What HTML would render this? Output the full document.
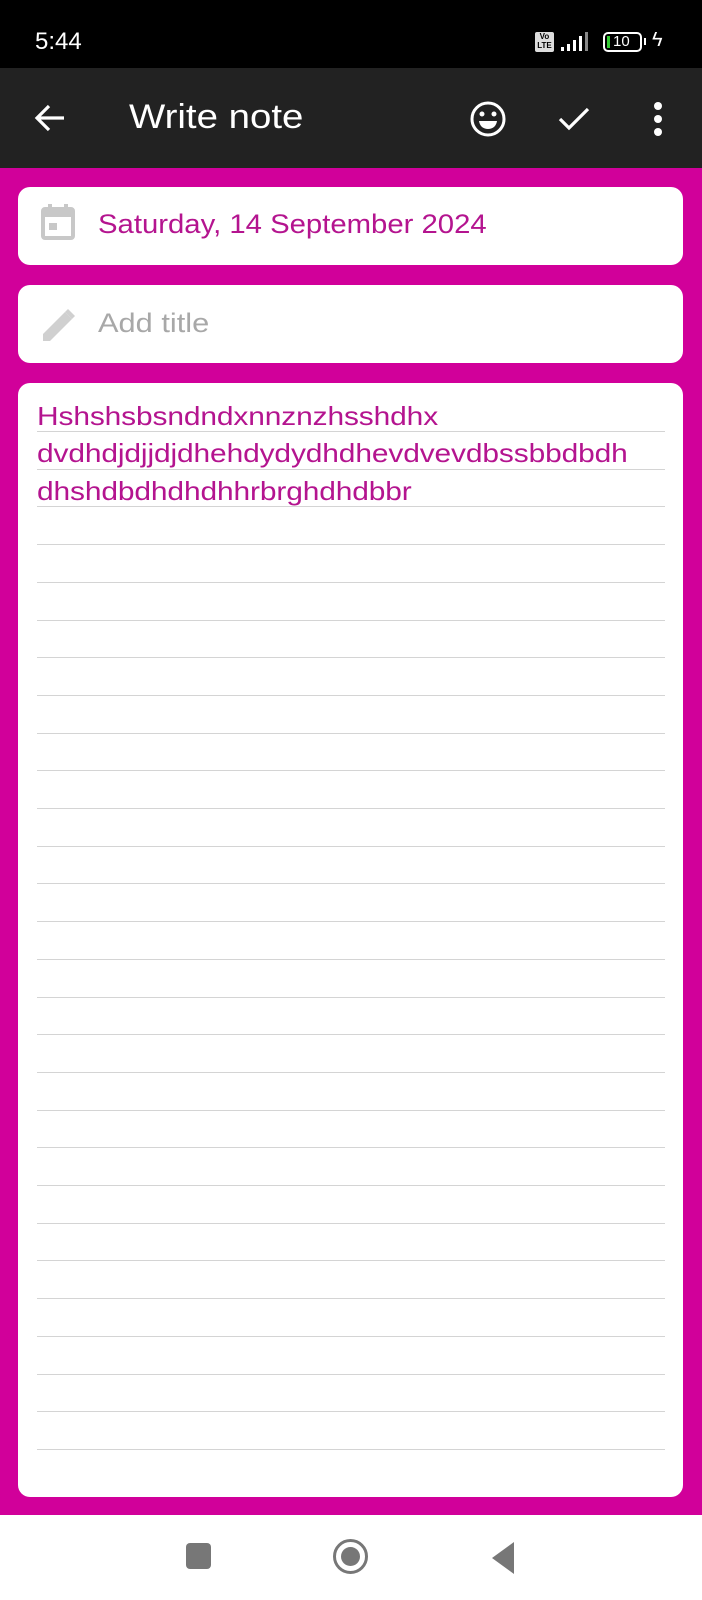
<!DOCTYPE html>
<html><head><style>
*{margin:0;padding:0;box-sizing:border-box}
body{width:702px;height:1600px;overflow:hidden;background:#d1009a;font-family:"Liberation Sans",sans-serif;position:relative}
.sb{position:absolute;top:0;left:0;width:702px;height:68px;background:#000;color:#fff}
.tb{position:absolute;top:68px;left:0;width:702px;height:100px;background:#222}
.card{position:absolute;left:18px;width:665px;background:#fff;border-radius:12px}
.nav{position:absolute;top:1515px;left:0;width:702px;height:85px;background:#fff}
.line{position:absolute;left:19px;width:628px;height:1px;background:#d4d4d4}
.nt{position:absolute;left:19px;font-size:26px;color:#b4148f;letter-spacing:-0.1px;transform:scaleX(1.15);transform-origin:0 0;white-space:nowrap}
.sx{transform-origin:0 0;white-space:nowrap}
</style></head><body>
<div class="sb">
<div style="position:absolute;left:35px;top:28px;font-size:24px">5:44</div>
<div style="position:absolute;left:535px;top:32px;width:19px;height:20px;background:#ddd;border-radius:2px;font-size:8px;color:#000;line-height:9px;text-align:center;font-weight:bold">Vo<br>LTE</div>
<svg style="position:absolute;left:561px;top:32px" width="32" height="20"><rect x="0" y="15" width="3" height="4" fill="#fff"/><rect x="6" y="12" width="3" height="7" fill="#fff"/><rect x="12" y="8" width="3" height="11" fill="#fff"/><rect x="18" y="4" width="3" height="15" fill="#fff"/><rect x="24" y="0" width="3" height="19" fill="#888"/></svg>
<div style="position:absolute;left:603px;top:32px;width:39px;height:20px;border:2px solid #fff;border-radius:5px;font-size:15px;line-height:16px;padding-left:8px">10</div>
<div style="position:absolute;left:607px;top:36px;width:3px;height:12px;background:#3c3"></div>
<div style="position:absolute;left:644px;top:38px;width:2px;height:7px;background:#fff"></div>
<div style="position:absolute;left:652px;top:29px;font-size:20px">ϟ</div>
</div>
<div class="tb">
<svg style="position:absolute;left:34px;top:35px" width="32" height="30" viewBox="0 0 32 30"><path d="M30 15H4M15 3L3 15l12 12" stroke="#fff" stroke-width="3.2" fill="none"/></svg>
<div class="sx" style="position:absolute;left:129px;top:30px;font-size:34px;color:#fff;transform:scaleX(1.13)">Write note</div>
<svg style="position:absolute;left:469px;top:32px" width="38" height="38" viewBox="0 0 38 38"><circle cx="19" cy="19" r="16" stroke="#fff" stroke-width="3" fill="none"/><circle cx="13" cy="14" r="2.5" fill="#fff"/><circle cx="25" cy="14" r="2.5" fill="#fff"/><path d="M10 21h18c-1 6-5 8-9 8s-8-2-9-8z" fill="#fff"/></svg>
<svg style="position:absolute;left:557px;top:37px" width="34" height="28" viewBox="0 0 34 28"><path d="M3 14l9 9L31 4" stroke="#fff" stroke-width="3.2" fill="none"/></svg>
<svg style="position:absolute;left:651px;top:33px" width="14" height="36"><circle cx="7" cy="5" r="4" fill="#fff"/><circle cx="7" cy="18" r="4" fill="#fff"/><circle cx="7" cy="31" r="4" fill="#fff"/></svg>
</div>
<div class="card" style="top:187px;height:78px">
<svg style="position:absolute;left:23px;top:17px" width="34" height="36" viewBox="0 0 34 36"><rect x="2" y="5" width="30" height="29" rx="2" fill="none" stroke="#c8c8c8" stroke-width="4"/><rect x="2" y="5" width="30" height="8" fill="#c8c8c8"/><rect x="7" y="0" width="4" height="7" fill="#c8c8c8"/><rect x="23" y="0" width="4" height="7" fill="#c8c8c8"/><rect x="8" y="19" width="8" height="7" fill="#c8c8c8"/></svg>
<div class="sx" style="position:absolute;left:80px;top:22px;font-size:27px;color:#b4148f;transform:scaleX(1.085)">Saturday, 14 September 2024</div>
</div>
<div class="card" style="top:285px;height:78px">
<svg style="position:absolute;left:23px;top:22px" width="36" height="36" viewBox="0 0 36 36"><path d="M2 34v-7L24 5l7 7L9 34z" fill="#d0d0d0"/><path d="M27 2l7 7-3 3-7-7z" fill="#d0d0d0"/></svg>
<div class="sx" style="position:absolute;left:80px;top:23px;font-size:27px;color:#a8a8a8;transform:scaleX(1.14)">Add title</div>
</div>
<div class="card" style="top:383px;height:1114px">
<div id="lines"></div>
<div class="nt" style="top:18px">Hshshsbsndndxnnznzhsshdhx</div>
<div class="nt" style="top:55px">dvdhdjdjjdjdhehdydydhdhevdvevdbssbbdbdh</div>
<div class="nt" style="top:93px">dhshdbdhdhdhhrbrghdhdbbr</div>
</div>
<div class="nav">
<div style="position:absolute;left:186px;top:28px;width:25px;height:26px;background:#777;border-radius:4px"></div>
<div style="position:absolute;left:333px;top:24px;width:35px;height:35px;border:3px solid #777;border-radius:50%"></div>
<div style="position:absolute;left:341px;top:32px;width:19px;height:19px;background:#777;border-radius:50%"></div>
<svg style="position:absolute;left:490px;top:27px" width="24" height="32"><path d="M24 0v32L2 16z" fill="#777"/></svg>
</div>
<script>
var h='';for(var i=0;i<28;i++){h+='<div class="line" style="top:'+(48+i*37.7).toFixed(1)+'px"></div>';}
document.getElementById('lines').innerHTML=h;
</script>
</body></html>
